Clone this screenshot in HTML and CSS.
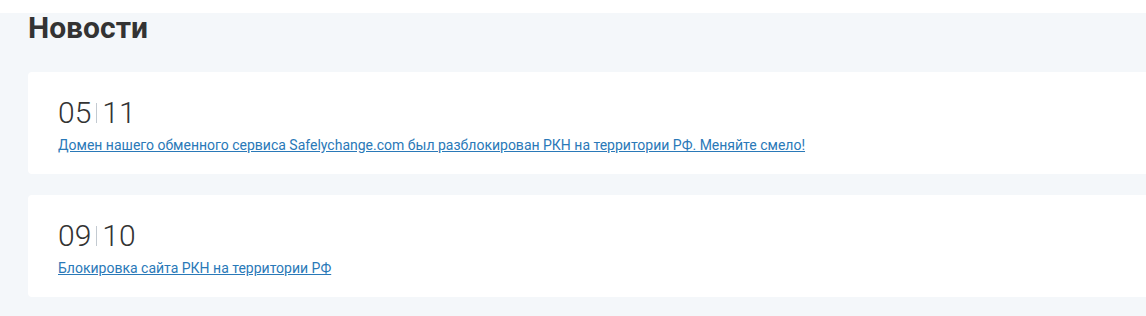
FILE: index.html
```html
<!DOCTYPE html>
<html lang="ru">
<head>
<meta charset="utf-8">
<title>Новости</title>
<link rel="stylesheet" href="styles.css">
</head>
<body>
<section class="news">
  <h2 class="news-title">Новости</h2>
  <div class="news-list">
    <article class="news-card">
      <div class="news-date"><span>05</span><span class="sep"></span><span>11</span></div>
      <a class="news-link" href="#">Домен нашего обменного сервиса Safelychange.com был разблокирован РКН на территории РФ. Меняйте смело!</a>
    </article>
    <article class="news-card">
      <div class="news-date"><span>09</span><span class="sep"></span><span>10</span></div>
      <a class="news-link" href="#">Блокировка сайта РКН на территории РФ</a>
    </article>
  </div>
</section>
</body>
</html>
```

FILE: styles.css
```css
html, body {
  margin: 0;
  padding: 0;
  background: #ffffff;
  font-family: Roboto, "Noto Sans", Arial, sans-serif;
  overflow: hidden;
}

.news {
  margin-top: 13px;
  background: #f4f7fa;
  padding: 0 0 30px 28px;
  min-height: 303px;
  box-sizing: border-box;
}

.news-title {
  margin: 0;
  font-size: 30px;
  font-weight: 700;
  line-height: 29px;
  color: #333333;
  padding-top: 0;
}

.news-list {
  display: flex;
  flex-direction: column;
  gap: 21px;
  margin-top: 30px;
  margin-right: -40px;
}

.news-card {
  background: #ffffff;
  border-radius: 4px;
  height: 102px;
  box-sizing: border-box;
  padding: 26px 30px 0 30px;
}

.news-date {
  display: flex;
  align-items: center;
  font-size: 30px;
  font-weight: 300;
  line-height: 30px;
  color: #333333;
}

.news-date .sep {
  display: inline-block;
  width: 1px;
  height: 20px;
  background: #c3cad1;
  margin: 0 5px 0 5px;
}

.news-link {
  display: inline-block;
  margin-top: 9px;
  font-size: 14px;
  line-height: 16px;
  color: #2a79b8;
  text-decoration: underline;
}
```
